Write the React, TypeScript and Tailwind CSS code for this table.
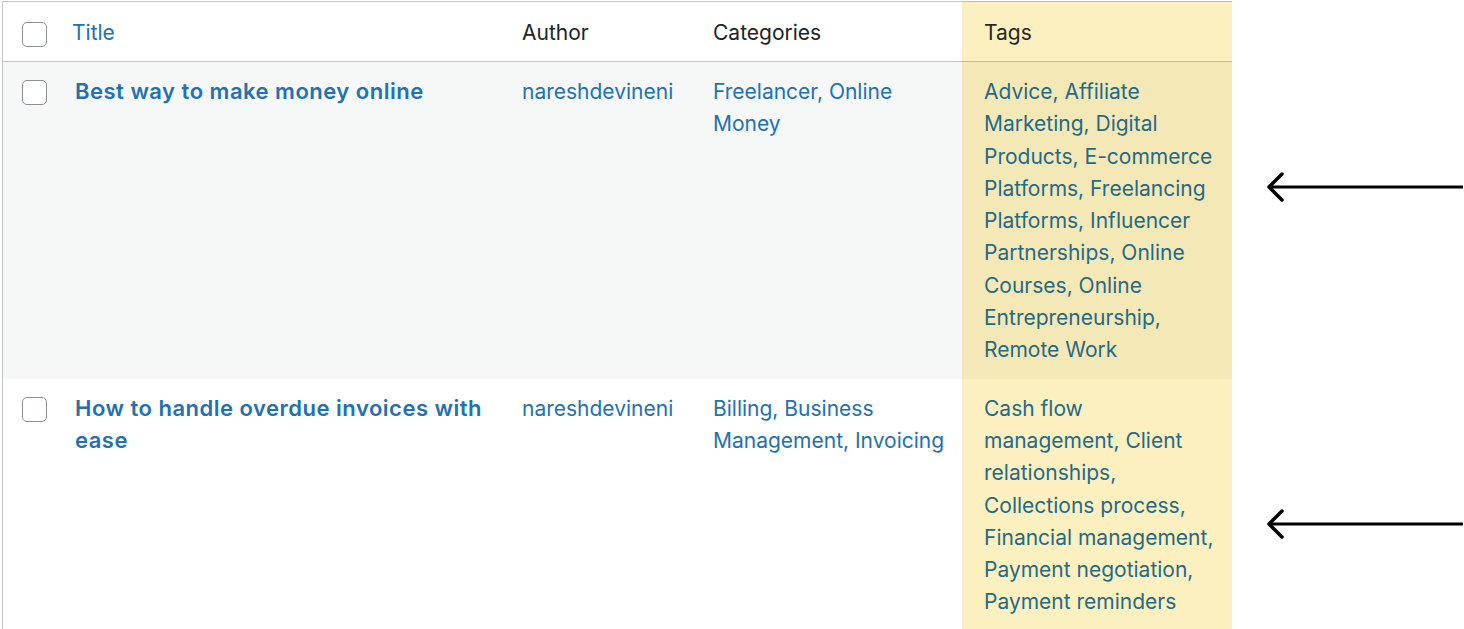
import React from "react";

type Post = {
  title: string;
  author: string;
  categories: string[];
  tags: string[];
  arrowTop: string;
  alt: boolean;
};

const posts: Post[] = [
  {
    title: "Best way to make money online",
    author: "nareshdevineni",
    categories: ["Freelancer", "Online Money"],
    tags: [
      "Advice",
      "Affiliate Marketing",
      "Digital Products",
      "E-commerce Platforms",
      "Freelancing Platforms",
      "Influencer Partnerships",
      "Online Courses",
      "Online Entrepreneurship",
      "Remote Work",
    ],
    arrowTop: "pt-[109px]",
    alt: true,
  },
  {
    title: "How to handle overdue invoices with ease",
    author: "nareshdevineni",
    categories: ["Billing", "Business Management", "Invoicing"],
    tags: [
      "Cash flow management",
      "Client relationships",
      "Collections process",
      "Financial management",
      "Payment negotiation",
      "Payment reminders",
    ],
    arrowTop: "pt-[129px]",
    alt: false,
  },
];

function Checkbox() {
  return (
    <span className="block h-[25px] w-[25px] rounded-[5px] border-[1.5px] border-[#8c8f94] bg-white" />
  );
}

function Arrow() {
  return (
    <svg width="200" height="32" viewBox="0 0 200 32" fill="none">
      <path d="M4 16 H198" stroke="#000" strokeWidth="3" />
      <path
        d="M17 3 L4 16 L17 29"
        stroke="#000"
        strokeWidth="3.5"
        strokeLinecap="round"
        strokeLinejoin="round"
      />
    </svg>
  );
}

// comma-separated term links, the comma stays with the term so lines break after it
function LinkList({ items, className }: { items: string[]; className: string }) {
  return <span className={className}>{items.join(", ")}</span>;
}

const cols = "grid grid-cols-[48px_450px_191px_271px_270px_1fr]";

export default function App() {
  return (
    <div
      className="min-h-screen bg-white pt-[1px] pl-[2px] text-[21px] leading-[32.3px] text-[#1d2327]"
      style={{ fontFamily: "Inter, 'Noto Sans', sans-serif" }}
    >
      {/* Header */}
      <div className={cols}>
        <div className="flex h-[61px] border-t border-l border-b border-[#c3c4c7] pt-[20px] pl-[19px]">
          <Checkbox />
        </div>
        <div className="flex h-[61px] items-center border-t border-b border-[#c3c4c7] pt-[3px] pl-[22px] text-[#2271b1]">
          Title
        </div>
        <div className="flex h-[61px] items-center border-t border-b border-[#c3c4c7] pt-[3px] pl-[22px]">
          Author
        </div>
        <div className="flex h-[61px] items-center border-t border-b border-[#c3c4c7] pt-[3px] pl-[22px]">
          Categories
        </div>
        <div className="flex h-[61px] items-center border-t border-b border-[#c8bb94] bg-[#fdf0c0] pt-[3px] pl-[22px] text-[#26271f]">
          Tags
        </div>
        <div />
      </div>

      {/* Rows */}
      {posts.map((p) => {
        const bg = p.alt ? "bg-[#f6f7f7]" : "bg-white";
        const tagBg = p.alt ? "bg-[#f5e8b7]" : "bg-[#fdf0c0]";
        return (
          <div key={p.title} className={cols}>
            <div className={`${bg} border-l border-[#c3c4c7] pt-[18px] pl-[19px]`}>
              <Checkbox />
            </div>
            <div
              className={`${bg} pt-[13px] pb-[12px] pl-[25px] pr-[12px] text-[22px] leading-[32.3px] font-semibold tracking-[0.5px] text-[#2271b1]`}
            >
              {p.title}
            </div>
            <div className={`${bg} pt-[14px] pb-[12px] pl-[22px] text-[#2271b1]`}>{p.author}</div>
            <div className={`${bg} pt-[14px] pb-[12px] pl-[22px] pr-[14px]`}>
              <LinkList items={p.categories} className="text-[#2271b1]" />
            </div>
            <div className={`${tagBg} pt-[14px] pb-[12px] pl-[22px] pr-[12px]`}>
              <LinkList items={p.tags} className="text-[#236a86]" />
            </div>
            <div className={`${p.arrowTop} pl-[33px]`}>
              <Arrow />
            </div>
          </div>
        );
      })}
    </div>
  );
}
